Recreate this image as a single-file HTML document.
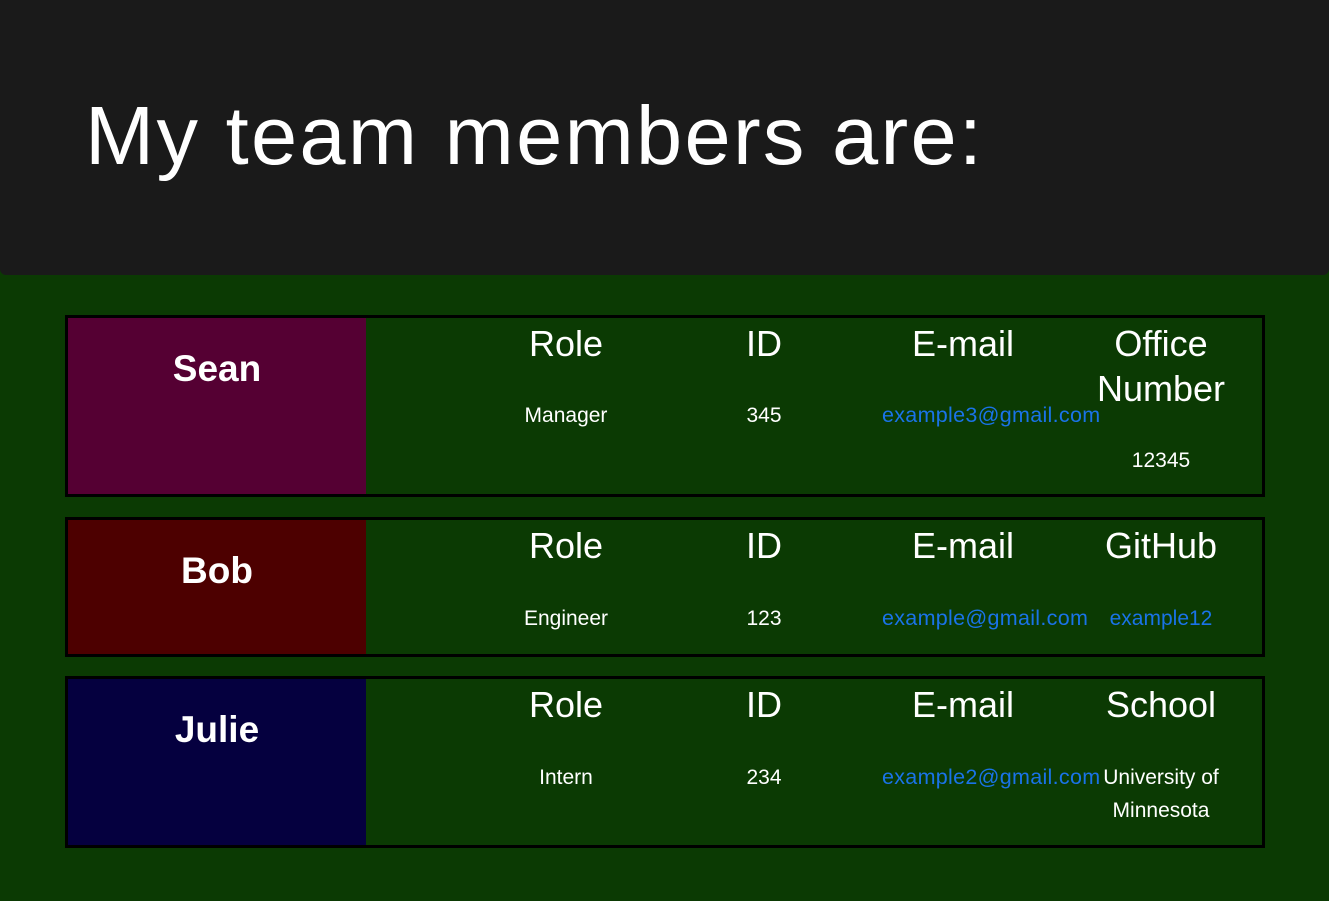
<!DOCTYPE html>
<html><head><meta charset="utf-8"><style>
*{margin:0;padding:0;box-sizing:border-box}
body{width:1329px;height:901px;background:#0b3a03;font-family:"Segoe UI","Liberation Sans",sans-serif;color:#fff;position:relative;overflow:hidden}
.hdr{position:absolute;left:0;top:0;width:1329px;height:275px;background:#1a1a1a;border-radius:0 0 6px 6px}
.hdr h1{position:absolute;left:85px;top:86px;font-size:83px;font-weight:400;line-height:100px;letter-spacing:2.3px}
.card{position:absolute;left:65px;width:1200px;border:3px solid #000}
.name{position:absolute;left:0;top:0;bottom:0;width:298px;text-align:center;font-weight:bold;font-size:37px;padding-top:30px}
.c{position:absolute;width:200px;text-align:center}
.h{font-size:36px;line-height:45px}
.v{font-size:21px;line-height:33px}
a{color:#1a73e8;text-decoration:none}
.em{font-size:21.5px;letter-spacing:0.3px}
</style></head><body>
<div class="hdr"><h1>My team members are:</h1></div>

<div class="card" style="top:315px;height:182px">
<div class="name" style="background:#550033">Sean</div>
<div class="c h" style="left:398px;top:3px">Role</div>
<div class="c h" style="left:596px;top:3px">ID</div>
<div class="c h" style="left:795px;top:3px">E-mail</div>
<div class="c h" style="left:993px;top:3px">Office<br>Number</div>
<div class="c v" style="left:398px;top:81px">Manager</div>
<div class="c v" style="left:596px;top:81px">345</div>
<div class="c v em" style="left:814px;top:81px;width:240px;text-align:left"><a>example3@gmail.com</a></div>
<div class="c v" style="left:993px;top:126px">12345</div>
</div>

<div class="card" style="top:517px;height:140px">
<div class="name" style="background:#4d0000">Bob</div>
<div class="c h" style="left:398px;top:3px">Role</div>
<div class="c h" style="left:596px;top:3px">ID</div>
<div class="c h" style="left:795px;top:3px">E-mail</div>
<div class="c h" style="left:993px;top:3px">GitHub</div>
<div class="c v" style="left:398px;top:82px">Engineer</div>
<div class="c v" style="left:596px;top:82px">123</div>
<div class="c v em" style="left:814px;top:82px;width:240px;text-align:left"><a>example@gmail.com</a></div>
<div class="c v" style="left:993px;top:82px"><a>example12</a></div>
</div>

<div class="card" style="top:676px;height:172px">
<div class="name" style="background:#05003f">Julie</div>
<div class="c h" style="left:398px;top:3px">Role</div>
<div class="c h" style="left:596px;top:3px">ID</div>
<div class="c h" style="left:795px;top:3px">E-mail</div>
<div class="c h" style="left:993px;top:3px">School</div>
<div class="c v" style="left:398px;top:82px">Intern</div>
<div class="c v" style="left:596px;top:82px">234</div>
<div class="c v em" style="left:814px;top:82px;width:240px;text-align:left"><a>example2@gmail.com</a></div>
<div class="c v" style="left:993px;top:82px">University of<br>Minnesota</div>
</div>
</body></html>
